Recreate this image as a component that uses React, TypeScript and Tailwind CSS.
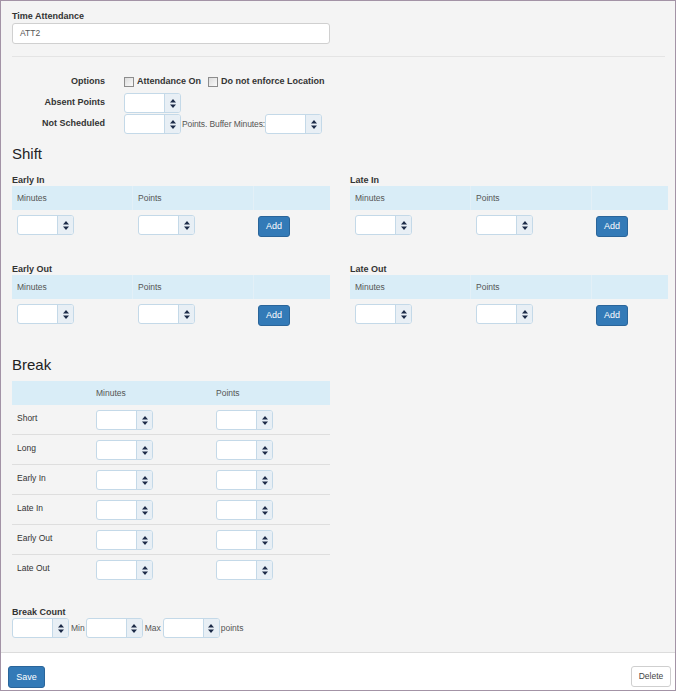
import React from "react";

function Spinner({ className = "" }: { className?: string }) {
  return (
    <div
      className={`flex h-[20px] w-[57px] shrink-0 overflow-hidden rounded-[3px] border border-[#c4d9e8] bg-white ${className}`}
    >
      <div className="flex-1" />
      <div className="flex w-[16px] items-center justify-center border-l border-[#c4d9e8] bg-[#e8eff5]">
        <svg width="6" height="9" viewBox="0 0 6 9">
          <path d="M3 0L6 3.6H0Z M0 5.4H6L3 9Z" fill="#1d2b48" />
        </svg>
      </div>
    </div>
  );
}

function Checkbox() {
  return (
    <span className="inline-block h-[10px] w-[10px] shrink-0 border border-[#8c8c8c] bg-gradient-to-br from-[#dcdcdc] to-[#fafafa]" />
  );
}

function BlueButton({ label, className = "" }: { label: string; className?: string }) {
  return (
    <button
      className={`block rounded-[3px] border border-[#2a659a] bg-[#337ab7] text-[9px] leading-none text-white ${className}`}
    >
      {label}
    </button>
  );
}

function ShiftBlock({ title, className = "" }: { title: string; className?: string }) {
  return (
    <div className={className}>
      <div className="h-[11px] text-[9px] leading-[11px] font-bold">{title}</div>
      <div className="grid h-[24px] grid-cols-[121px_121px_1fr] bg-[#d9edf7] text-[8.5px] text-[#555]">
        <div className="flex items-center border-r border-[#e3f0f7] pl-[5px]">Minutes</div>
        <div className="flex items-center border-r border-[#e3f0f7] pl-[5px]">Points</div>
        <div />
      </div>
      <div className="grid h-[32px] grid-cols-[121px_121px_1fr]">
        <div className="pl-[5px] pt-[5px]">
          <Spinner />
        </div>
        <div className="pl-[5px] pt-[5px]">
          <Spinner />
        </div>
        <div className="pl-[4px] pt-[6px]">
          <BlueButton label="Add" className="h-[21px] w-[32px]" />
        </div>
      </div>
    </div>
  );
}

const breakRows = ["Short", "Long", "Early In", "Late In", "Early Out", "Late Out"];

export default function App() {
  return (
    <div className="flex h-[691px] w-[676px] flex-col border border-[#a393a6] bg-[#f4f4f4] font-['Liberation_Sans',Arial,sans-serif] text-[#333]">
      <div className="flex-1 pl-[11px] pr-[7px] pt-[10px]">
        {/* Name */}
        <div className="h-[11px] text-[9px] leading-[11px] font-bold">Time Attendance</div>
        <div className="mt-[1px] flex h-[21px] w-[318px] items-center rounded-[3px] border border-[#d0d0d0] bg-white px-[7px] text-[8.5px] text-[#555]">
          ATT2
        </div>
        <div className="mt-[12px] h-px w-[653px] bg-[#e4e4e4]" />

        {/* Options */}
        <div className="mt-[19px] flex h-[12px] items-center text-[9px] font-bold">
          <div className="w-[93px] text-right">Options</div>
          <div className="ml-[19px] flex items-center">
            <Checkbox />
            <span className="ml-[3px]">Attendance On</span>
            <span className="ml-[7px]" />
            <Checkbox />
            <span className="ml-[3px]">Do not enforce Location</span>
          </div>
        </div>
        <div className="mt-[5px] flex h-[20px] items-center">
          <div className="w-[93px] text-right text-[9px] font-bold">Absent Points</div>
          <Spinner className="ml-[19px]" />
        </div>
        <div className="mt-[1px] flex h-[20px] items-center">
          <div className="w-[93px] text-right text-[9px] font-bold">Not Scheduled</div>
          <Spinner className="ml-[19px]" />
          <span className="ml-[1px] text-[8.5px] tracking-[-0.1px] text-[#555]">Points. Buffer Minutes:</span>
          <Spinner />
        </div>

        {/* Shift */}
        <div className="mt-[11px] h-[18px] text-[15px] leading-[18px] text-[#222]">Shift</div>
        <div className="grid w-[656px] grid-cols-2 gap-x-[20px]">
          <div>
            <ShiftBlock title="Early In" className="mt-[12px]" />
            <ShiftBlock title="Early Out" className="mt-[22px]" />
          </div>
          <div>
            <ShiftBlock title="Late In" className="mt-[12px]" />
            <ShiftBlock title="Late Out" className="mt-[22px]" />
          </div>
        </div>

        {/* Break */}
        <div className="mt-[25px] h-[18px] text-[15px] leading-[18px] text-[#222]">Break</div>
        <div className="mt-[7px] w-[318px]">
          <div className="grid h-[24px] grid-cols-[79px_120px_1fr] bg-[#d9edf7] text-[8.5px] text-[#555]">
            <div />
            <div className="flex items-center pl-[5px]">Minutes</div>
            <div className="flex items-center pl-[5px]">Points</div>
          </div>
          {breakRows.map((row, i) => (
            <div
              key={row}
              className={`grid h-[30px] grid-cols-[79px_120px_1fr] ${
                i < breakRows.length - 1 ? "border-b border-[#dedede]" : ""
              }`}
            >
              <div className="pl-[5px] pt-[8px] text-[8.5px] leading-[10px]">{row}</div>
              <div className="pl-[5px] pt-[5px]">
                <Spinner />
              </div>
              <div className="pl-[5px] pt-[5px]">
                <Spinner />
              </div>
            </div>
          ))}
        </div>

        {/* Break count */}
        <div className="mt-[22px] h-[11px] text-[9px] leading-[11px] font-bold">Break Count</div>
        <div className="flex h-[20px] items-center text-[8.5px] text-[#555]">
          <Spinner />
          <span className="ml-[2px]">Min</span>
          <Spinner className="ml-[1px]" />
          <span className="ml-[2px]">Max</span>
          <Spinner className="ml-[2px]" />
          <span className="ml-[1px]">points</span>
        </div>
      </div>

      {/* Footer */}
      <div className="flex h-[38px] items-start justify-between border-t border-[#dcdcdc] bg-white pl-[7px] pr-[4px] pt-[13px]">
        <BlueButton label="Save" className="h-[22px] w-[37px]" />
        <button className="h-[21px] w-[40px] rounded-[3px] border border-[#cfcfcf] bg-white text-[8.5px] text-[#444]">
          Delete
        </button>
      </div>
    </div>
  );
}
